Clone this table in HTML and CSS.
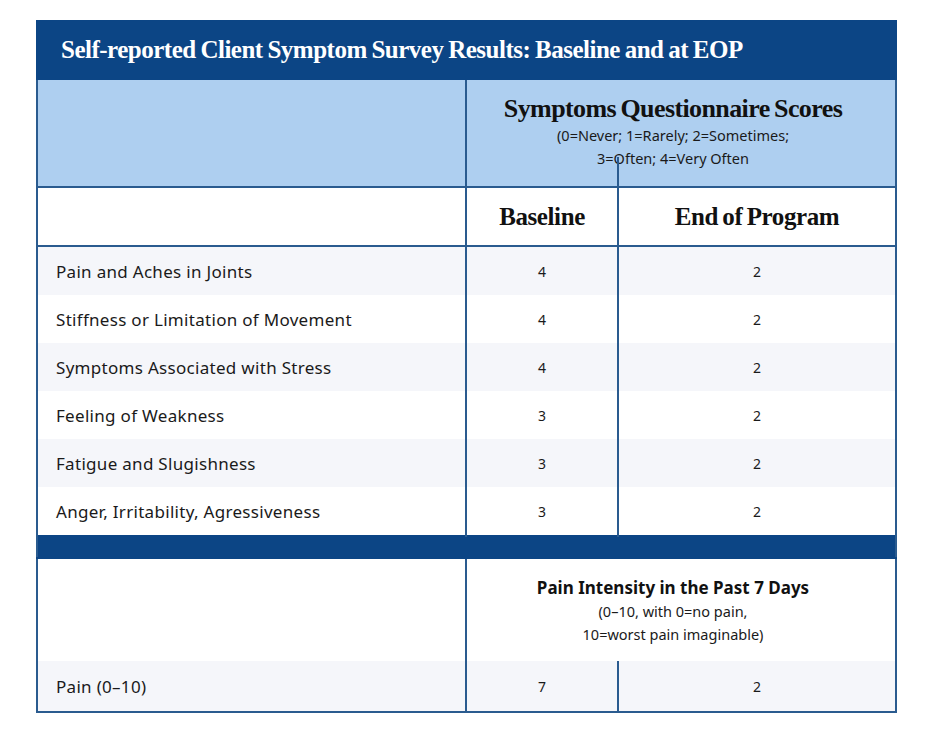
FILE: index.html
```html
<!DOCTYPE html>
<html>
<head>
<meta charset="utf-8">
<link rel="stylesheet" href="styles.css">
</head>
<body>
<table class="survey">
  <colgroup>
    <col class="c-label">
    <col class="c-base">
    <col class="c-eop">
  </colgroup>
  <tr class="title-row">
    <th colspan="3" class="title">Self-reported Client Symptom Survey Results: Baseline and at EOP</th>
  </tr>
  <tr class="group-row">
    <td class="blank"></td>
    <th colspan="2" class="group">
      <div class="group-title">Symptoms Questionnaire Scores</div>
      <div class="group-sub">(0=Never; 1=Rarely; 2=Sometimes;</div>
      <div class="group-sub">3=Often; 4=Very Often</div>
      <span class="stray-line"></span>
    </th>
  </tr>
  <tr class="head-row">
    <td></td>
    <th class="colhead">Baseline</th>
    <th class="colhead">End of Program</th>
  </tr>
  <tr class="row shade"><td class="label">Pain and Aches in Joints</td><td class="num">4</td><td class="num">2</td></tr>
  <tr class="row"><td class="label">Stiffness or Limitation of Movement</td><td class="num">4</td><td class="num">2</td></tr>
  <tr class="row shade"><td class="label">Symptoms Associated with Stress</td><td class="num">4</td><td class="num">2</td></tr>
  <tr class="row"><td class="label">Feeling of Weakness</td><td class="num">3</td><td class="num">2</td></tr>
  <tr class="row shade"><td class="label">Fatigue and Slugishness</td><td class="num">3</td><td class="num">2</td></tr>
  <tr class="row"><td class="label">Anger, Irritability, Agressiveness</td><td class="num">3</td><td class="num">2</td></tr>
  <tr class="band-row"><td colspan="3" class="band"></td></tr>
  <tr class="pain-head-row">
    <td class="blank-white"></td>
    <th colspan="2" class="pain-group">
      <div class="pain-title">Pain Intensity in the Past 7 Days</div>
      <div class="pain-sub">(0–10, with 0=no pain,</div>
      <div class="pain-sub">10=worst pain imaginable)</div>
    </th>
  </tr>
  <tr class="row shade last"><td class="label">Pain (0–10)</td><td class="num">7</td><td class="num">2</td></tr>
</table>
</body>
</html>
```
FILE: styles.css
```css
html, body {
  margin: 0;
  padding: 0;
  background: #ffffff;
}
body {
  padding: 20px 0 0 36px;
}
.survey {
  border-collapse: collapse;
  table-layout: fixed;
  width: 859px;
  font-family: "Noto Sans", "Open Sans", sans-serif;
  color: #1a1a1a;
}
.c-label { width: 429px; }
.c-base { width: 152px; }
.c-eop { width: 278px; }

.survey td, .survey th {
  border: 2px solid #2a5b8f;
  padding: 0;
}

.title-row th {
  background: #0c4585;
  border-color: #0c4585;
  height: 55px;
}
.title {
  color: #ffffff;
  text-align: left;
  padding-left: 23px !important;
  padding-bottom: 1px !important;
  font-family: "Liberation Serif", "DejaVu Serif", serif;
  font-weight: 700;
  font-size: 25px;
  letter-spacing: -0.5px;
  word-spacing: -1px;
}

.group-row td, .group-row th {
  background: #aecff0;
  height: 106px;
}
.group {
  position: relative;
  text-align: center;
  padding-right: 16px !important;
  font-weight: 400;
}
.group-title {
  font-family: "Liberation Serif", "DejaVu Serif", serif;
  font-weight: 700;
  font-size: 26px;
  letter-spacing: -0.6px;
  word-spacing: -1.5px;
  color: #111111;
  line-height: 30px;
  margin-top: -2px;
}
.group-sub {
  font-size: 14.5px;
  line-height: 23px;
  color: #1a1a1a;
}
.stray-line {
  position: absolute;
  left: 150px;
  bottom: 0;
  width: 2px;
  height: 29px;
  background: #2a5b8f;
}

.head-row td, .head-row th {
  height: 57px;
  background: #ffffff;
}
.colhead {
  font-family: "Liberation Serif", "DejaVu Serif", serif;
  font-weight: 700;
  font-size: 25px;
  letter-spacing: -0.4px;
  word-spacing: -1.5px;
  color: #111111;
  text-align: center;
}

.row td {
  height: 48px;
  background: #ffffff;
}
.row.shade td {
  background: #f5f6fa;
}
.row td, .head-row td {
  border-top: none;
  border-bottom: none;
}
.head-row td, .head-row th {
  border-bottom: 2px solid #2a5b8f;
}
.label {
  font-size: 17px;
  padding-left: 18px !important;
  letter-spacing: 0.3px;
  color: #1a1a1a;
}
.num {
  text-align: center;
  font-size: 14px;
  color: #1a1a1a;
}

.band-row td {
  background: #0c4585;
  border-color: #0c4585;
  border-left: 2px solid #2a5b8f;
  border-right: 2px solid #2a5b8f;
  height: 20px;
}

.pain-head-row td, .pain-head-row th {
  background: #ffffff;
  height: 102px;
  border-bottom: none;
  border-top: none;
}
.pain-group {
  text-align: center;
  padding-right: 16px !important;
  font-weight: 400;
}
.pain-title {
  font-weight: 700;
  font-size: 17px;
  line-height: 24px;
  color: #111111;
  margin-top: 2px;
}
.pain-sub {
  font-size: 14.5px;
  line-height: 23px;
}
.row.last td {
  height: 50px;
  border-bottom: 2px solid #2a5b8f;
}
```
